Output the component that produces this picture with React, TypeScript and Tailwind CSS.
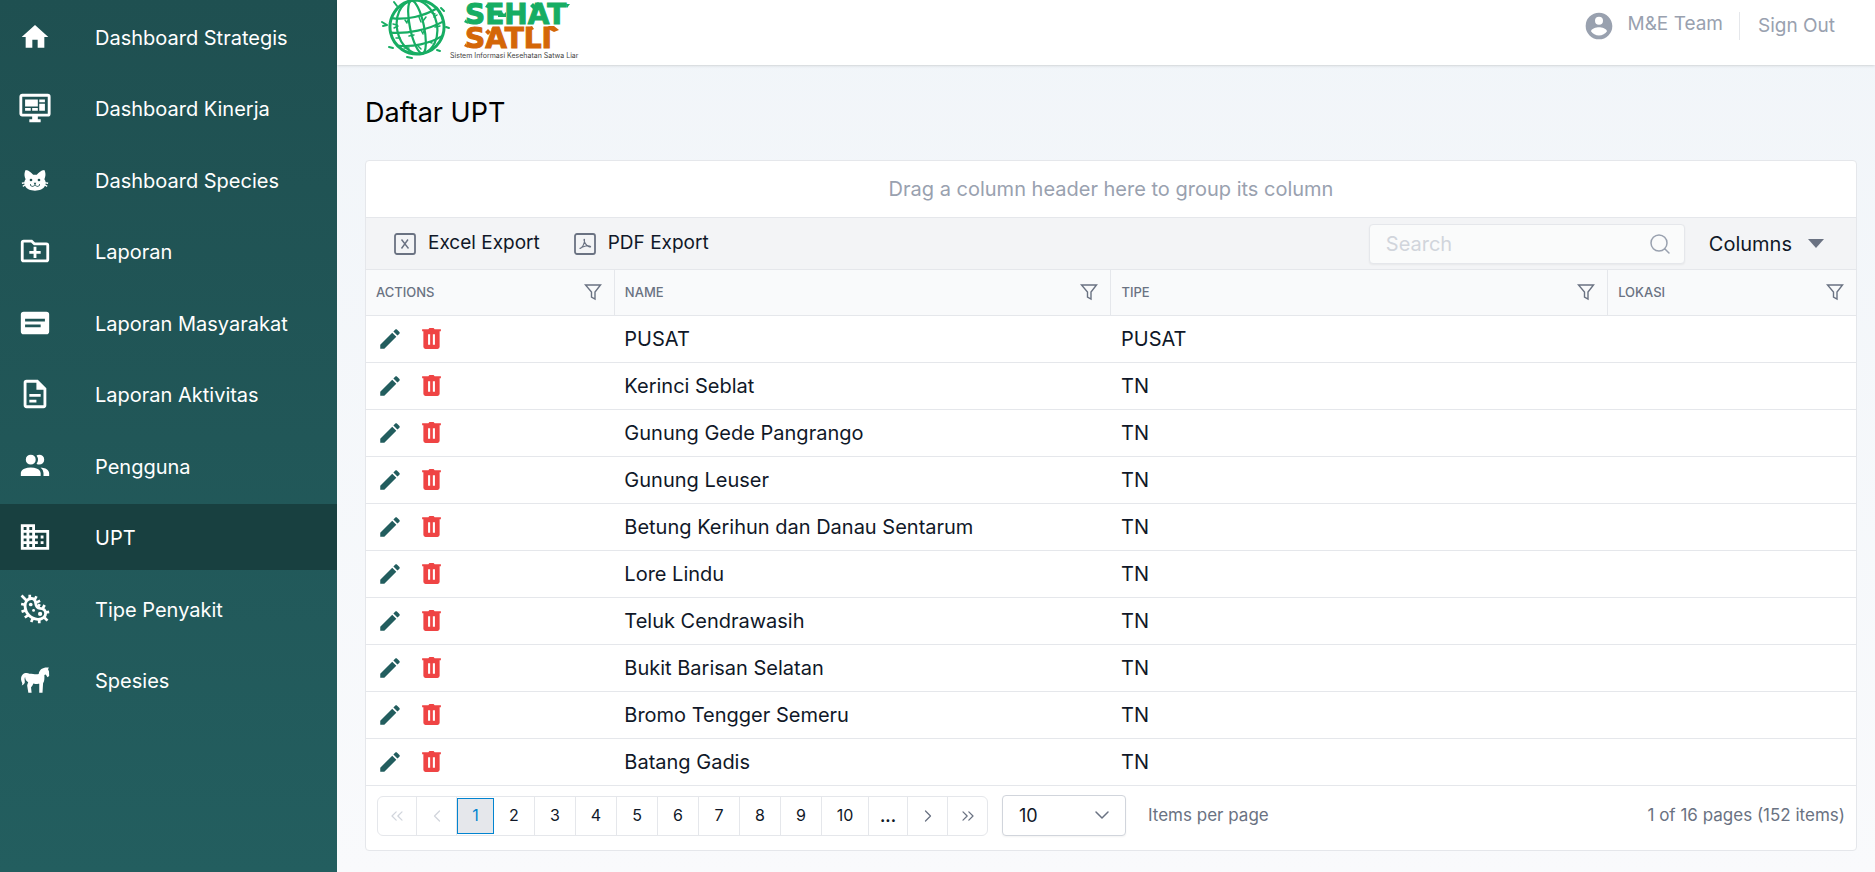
import { useState, type ReactNode } from "react";
import { Search, ChevronLeft, ChevronRight, ChevronsLeft, ChevronsRight, ChevronDown } from "lucide-react";

type Upt = { id: number; name: string; tipe: string; lokasi: string };

const rows: Upt[] = [
  { id: 1, name: "PUSAT", tipe: "PUSAT", lokasi: "" },
  { id: 2, name: "Kerinci Seblat", tipe: "TN", lokasi: "" },
  { id: 3, name: "Gunung Gede Pangrango", tipe: "TN", lokasi: "" },
  { id: 4, name: "Gunung Leuser", tipe: "TN", lokasi: "" },
  { id: 5, name: "Betung Kerihun dan Danau Sentarum", tipe: "TN", lokasi: "" },
  { id: 6, name: "Lore Lindu", tipe: "TN", lokasi: "" },
  { id: 7, name: "Teluk Cendrawasih", tipe: "TN", lokasi: "" },
  { id: 8, name: "Bukit Barisan Selatan", tipe: "TN", lokasi: "" },
  { id: 9, name: "Bromo Tengger Semeru", tipe: "TN", lokasi: "" },
  { id: 10, name: "Batang Gadis", tipe: "TN", lokasi: "" },
];

const icons = {
  home: "M10,20V14H14V20H19V12H22L12,3L2,12H5V20H10Z",
  monitor: "M21,16V4H3V16H21M21,2A2,2 0 0,1 23,4V16A2,2 0 0,1 21,18H14V20H16V22H8V20H10V18H3C1.89,18 1,17.1 1,16V4C1,2.89 1.89,2 3,2H21M5,6H14V11H5V6M15,6H19V8H15V6M19,9V14H15V9H19M5,12H9V14H5V12M10,12H14V14H10V12Z",
  cat: "M12,8L10.67,8.09C9.81,7.07 7.4,4.5 5,4.5C5,4.5 3.03,7.46 4.96,11.41C4.41,12.24 4.07,12.67 4,13.66L2.07,13.95L2.28,14.93L4.04,14.67L4.18,15.38L2.61,16.32L3.08,17.21L4.53,16.32C5.68,18.76 8.59,20 12,20C15.41,20 18.32,18.76 19.47,16.32L20.92,17.21L21.39,16.32L19.82,15.38L19.96,14.67L21.72,14.93L21.93,13.95L20,13.66C19.93,12.67 19.59,12.24 19.04,11.41C20.97,7.46 19,4.5 19,4.5C16.6,4.5 14.19,7.07 13.33,8.09L12,8M9,11A1,1 0 0,1 10,12A1,1 0 0,1 9,13A1,1 0 0,1 8,12A1,1 0 0,1 9,11M15,11A1,1 0 0,1 16,12A1,1 0 0,1 15,13A1,1 0 0,1 14,12A1,1 0 0,1 15,11M11,14H13L12.3,15.39C12.5,16.03 13.06,16.5 13.75,16.5A1.5,1.5 0 0,0 15.25,15H15.75A2,2 0 0,1 13.75,17C13,17 12.35,16.59 12,16V16H12C11.65,16.59 11,17 10.25,17A2,2 0 0,1 8.25,15H8.75A1.5,1.5 0 0,0 10.25,16.5C10.94,16.5 11.5,16.03 11.7,15.39L11,14Z",
  folder: "M4,4H10L12,6H20A2,2 0 0,1 22,8V18A2,2 0 0,1 20,20H4A2,2 0 0,1 2,18V6A2,2 0 0,1 4,4M4,6V18H20V8H11.2L9.2,6H4M11,9H13V12H16V14H13V17H11V14H8V12H11V9Z",
  card: "M20,4H4A2,2 0 0,0 2,6V18A2,2 0 0,0 4,20H20A2,2 0 0,0 22,18V6A2,2 0 0,0 20,4M5,13V15H16V13H5M5,9V11H19V9H5Z",
  doc: "M6,2A2,2 0 0,0 4,4V20A2,2 0 0,0 6,22H18A2,2 0 0,0 20,20V8L14,2H6M6,4H13V9H18V20H6V4M8,12V14H16V12H8M8,16V18H13V16H8Z",
  people: "M16 17V19H2V17S2 13 9 13 16 17 16 17M12.5 7.5A3.5 3.5 0 1 0 9 11A3.5 3.5 0 0 0 12.5 7.5M15.94 13A5.32 5.32 0 0 1 18 17V19H22V17S22 13.37 15.94 13M15 4A3.39 3.39 0 0 0 13.07 4.59A5 5 0 0 1 13.07 10.41A3.39 3.39 0 0 0 15 11A3.5 3.5 0 0 0 15 4Z",
  building: "M18,15H16V17H18M18,11H16V13H18M20,19H12V17H14V15H12V13H14V11H12V9H20M10,7H8V5H10M10,11H8V9H10M10,15H8V13H10M10,19H8V17H10M6,7H4V5H6M6,11H4V9H6M6,15H4V13H6M6,19H4V17H6M12,7V3H2V21H22V7H12Z",
  horse: "M21.8 3.1L20.6 3.2C17.6 3.1 15 4.6 14.6 7.8C12.6 8.3 10.6 7.6 8 7.6C6.8 6.9 4.6 6.9 3.3 8.1C2 9.4 1.9 11.4 2.5 13C3.1 14.4 3.3 14.9 2.6 15.8C4.1 15.6 5.1 14.3 4.8 12.6C4.6 11.6 4.5 10.6 5 9.8C5.1 11.6 5.9 12.7 7.2 13.5C6.6 15 6.3 15.7 6.6 16.7L7.3 21H9.6L9.2 17.1C10.2 15.9 10.6 15.2 10.8 14.4C12.3 14.8 13.6 14.9 15 14.7V21H17.3L17.7 14.3C18.8 12.7 18.7 10.4 18.6 8.4L19.6 8.2L20.8 10.1L22 9.2L21.9 6L21.2 4.4Z",
  user: "M12,19.2C9.5,19.2 7.29,17.92 6,16C6.03,14 10,12.9 12,12.9C14,12.9 17.97,14 18,16C16.71,17.92 14.5,19.2 12,19.2M12,5A3,3 0 0,1 15,8A3,3 0 0,1 12,11A3,3 0 0,1 9,8A3,3 0 0,1 12,5M12,2A10,10 0 0,0 2,12A10,10 0 0,0 12,22A10,10 0 0,0 22,12C22,6.47 17.5,2 12,2Z",
  pencil: "M20.71,7.04C21.1,6.65 21.1,6 20.71,5.63L18.37,3.29C18,2.9 17.35,2.9 16.96,3.29L15.12,5.12L18.87,8.87M3,17.25V21H6.75L17.81,9.93L14.06,6.18L3,17.25Z",
  trash: "M3 3H9L10 2H14L15 3H21V5H19.8V20A2 2 0 0 1 17.8 22H6.200A2 2 0 0 1 4.200 20V5H3V3M8.700 8V18H10.700V8H8.700M13.300 8V18H15.300V8H13.300Z",
};

function Icon({ d, className }: { d: string; className: string }) {
  return (
    <svg viewBox="0 0 24 24" className={className} fill="currentColor" aria-hidden="true">
      <path fillRule="evenodd" d={d} />
    </svg>
  );
}

function BacteriaIcon() {
  return (
    <svg viewBox="0 0 24 24" className="size-[34px]" fill="none" stroke="currentColor" aria-hidden="true">
      <path strokeWidth="2" d="M9.500 4.600C6.600 4.800 4.900 7 5 10C5.200 15.200 9 19 14 19.300C17.300 19.400 19.600 17.500 19.500 15C19.400 12.800 17.600 11.800 15.600 11.600C13.800 11.400 12.800 10.400 12.600 8.600C12.400 6.300 11.700 4.500 9.500 4.600Z" />
      <path strokeWidth="1.900" d="M2.500 2.500L6 6M8.300 2V4.600M13 3L11.800 5.300M15.600 6.200L12.800 7.500M2.200 8.500L5 9M2.500 14L5.700 12.800M4.800 18L7.800 16M9.300 21.200L10.600 18.400M15 22V19.300M20.800 20.200L18.600 18M22 14L19.400 14.500M18.800 9.200L17.200 12M15.300 8.600L14 11" />
      <g fill="currentColor" stroke="none">
        <circle cx="9" cy="8.800" r="1.300" />
        <circle cx="11" cy="13" r="1" />
        <circle cx="15.600" cy="15.500" r="1.500" />
      </g>
    </svg>
  );
}

const menu: { label: string; icon: ReactNode }[] = [
  { label: "Dashboard Strategis", icon: <Icon d={icons.home} className="size-8" /> },
  { label: "Dashboard Kinerja", icon: <Icon d={icons.monitor} className="size-[34px]" /> },
  { label: "Dashboard Species", icon: <Icon d={icons.cat} className="size-8" /> },
  { label: "Laporan", icon: <Icon d={icons.folder} className="size-[34px]" /> },
  { label: "Laporan Masyarakat", icon: <Icon d={icons.card} className="size-[34px]" /> },
  { label: "Laporan Aktivitas", icon: <Icon d={icons.doc} className="size-[34px]" /> },
  { label: "Pengguna", icon: <Icon d={icons.people} className="size-[34px]" /> },
  { label: "UPT", icon: <Icon d={icons.building} className="size-[34px]" /> },
  { label: "Tipe Penyakit", icon: <BacteriaIcon /> },
  { label: "Spesies", icon: <Icon d={icons.horse} className="size-[34px]" /> },
];

function Logo() {
  return (
    <svg width="210" height="64" viewBox="380 0 210 64" role="img" aria-label="Sehat Satli">
      <g fill="none" stroke="#17ad63" strokeWidth="2.200" transform="rotate(-12 417 27)">
        <circle cx="417" cy="27" r="27" strokeWidth="3" />
        <ellipse cx="417" cy="27" rx="20" ry="27" />
        <ellipse cx="417" cy="27" rx="7" ry="27" />
        <path d="M394 13C408 18 426 18 440 13M390 27C406 32 428 32 444 27M394 41C408 46 426 46 440 41" />
      </g>
      <g fill="none" stroke="#17ad63" strokeWidth="1.500" strokeLinecap="round">
        <path d="M393 24l4 1M394 28l4-2M405 20l2 3M407 22l2-3M419 17l2 5M423 21l3-4M432 13l3 1M434 17l3-2M396 38l4 0M409 36l5-1M421 30l2 4M425 29l-2 4M435 27l5-1M404 48l5 0M418 46l3 3M429 42l3 1" />
        <path strokeWidth="2" d="M382 22l5 3M383 26l4-1M394 2l3 4M389 47l4 1M407 57l5 1M437 50l3 1M446 27l3 1M441 8l3 3" />
      </g>
      <g fontSize="28" fontWeight="700" fontFamily="DejaVu Sans">
        <text x="465" y="24" fill="#17ad63" stroke="#17ad63">SEHAT</text>
        <text x="465" y="48" fill="#d46608" stroke="#d46608">SATLI</text>
      </g>
      <g fill="#17ad63">
        <path d="M485 7l2-3 4 1-1 4zM530 6l3-3 3 3-2 4zM536 4l2-2 3 3-3 3zM566 4l4 0-3 4zM466 19l-2 3 4 2z" />
        <path d="M498 12l2 2 2-2 2 2 2-2v5h-8z" />
      </g>
      <g fill="#d46608">
        <path d="M485 32l3-3 3 3-3 3zM491 29l3-2 1 4zM528 28l4-2 2 3-4 2zM546 28l3-2 5 0 5 4-5 2zM466 43l-2 3 4 2z" />
      </g>
      <text x="450" y="58" fontSize="7" fill="#3f3f3f" fontFamily="Inter">Sistem Informasi Kesehatan Satwa Liar</text>
    </svg>
  );
}

function FilterIcon() {
  return (
    <svg viewBox="0 0 18 18" className="size-[18px]" fill="none" stroke="currentColor" strokeWidth="1.400" aria-hidden="true">
      <path d="M1.500 2H16.500L11 9V16L7.500 14V9Z" />
    </svg>
  );
}

const fileIcon = "size-[22px] text-gray-500";

export default function App() {
  const [active, setActive] = useState("UPT");
  const [page, setPage] = useState(1);
  const [search, setSearch] = useState("");
  const [pageSize, setPageSize] = useState("10");

  const shown = rows.filter((r) => r.name.toLowerCase().includes(search.toLowerCase()));

  return (
    <div className="flex min-h-screen bg-linear-to-b from-[#f1f5f9] to-[#f9fafc] font-[Inter,sans-serif] text-gray-900">
      <aside className="w-[337px] shrink-0 bg-linear-to-b from-[#1f5051] to-[#235e5f] pt-1">
        <nav className="flex h-[709px] flex-col justify-between">
          {menu.map((m) => (
            <a
              key={m.label}
              href="#"
              onClick={() => setActive(m.label)}
              className={`flex h-[66px] items-center gap-[26px] text-xl text-white ${active === m.label ? "bg-[#184040]" : ""}`}
            >
              <span className="flex w-[69px] justify-center">{m.icon}</span>
              <span className="pt-0.5">{m.label}</span>
            </a>
          ))}
        </nav>
      </aside>

      <div className="flex min-w-0 flex-1 flex-col">
        <header className="flex h-[65px] items-start justify-between bg-white pr-10 pl-[43px] shadow-sm">
          <Logo />
          <div className="flex items-center pt-[10px] text-[19px] text-gray-400">
            <Icon d={icons.user} className="size-8" />
            <span className="-mt-1 ml-3">M&amp;E Team</span>
            <span className="ml-4 h-7 w-px bg-gray-200" />
            <button className="ml-[18px]">Sign Out</button>
          </div>
        </header>

        <main className="pt-7 pr-[18px] pl-7">
          <h1 className="text-[27px] leading-10 text-black">Daftar UPT</h1>

          <div className="mt-[27px] rounded border border-gray-200 bg-white">
            <div className="flex h-14 items-center justify-center text-xl text-gray-400">
              Drag a column header here to group its column
            </div>

            <div className="flex h-[53px] items-center border-y border-gray-200 bg-gray-100 pr-8 pl-7 text-xl">
              <button className="flex items-center gap-3 text-[19px]">
                <svg viewBox="0 0 22 22" className={fileIcon} fill="none" stroke="currentColor" aria-hidden="true">
                  <rect x="1" y="1" width="20" height="20" rx="2" strokeWidth="1.800" />
                  <path d="M7.500 6.500L14.500 15.500M14 6.500L7.500 15.500" strokeWidth="1.400" />
                </svg>
                Excel Export
              </button>
              <button className="ml-[34px] flex items-center gap-3 text-[19px]">
                <svg viewBox="0 0 22 22" className={fileIcon} fill="none" stroke="currentColor" aria-hidden="true">
                  <rect x="1" y="1" width="20" height="20" rx="2" strokeWidth="1.800" />
                  <path d="M5.500 15.500C8 15 11 11 10.500 6.500C9.500 5.500 10 10 13 12.500C15 14 17 14.500 16.500 13.500C15 12 9 13 6 15.500" strokeWidth="1.100" />
                </svg>
                PDF Export
              </button>
              <label className="ml-auto flex h-10 w-[316px] items-center rounded border border-gray-200 bg-[#fafbfb] pr-3 pl-4 shadow-xs">
                <input
                  aria-label="Search"
                  placeholder="Search"
                  value={search}
                  onChange={(e) => setSearch(e.target.value)}
                  className="min-w-0 flex-1 bg-transparent outline-none placeholder:text-gray-300"
                />
                <Search className="size-6 text-gray-400" strokeWidth={1.5} />
              </label>
              <button className="ml-6 flex items-center gap-4">
                Columns
                <svg viewBox="0 0 16 9" className="h-[9px] w-4 text-gray-500" fill="currentColor" aria-hidden="true">
                  <path d="M0 0H16L8 9Z" />
                </svg>
              </button>
            </div>

            <table className="w-full table-fixed border-collapse text-left">
              <colgroup>
                <col className="w-1/6" />
                <col className="w-1/3" />
                <col className="w-1/3" />
                <col className="w-1/6" />
              </colgroup>
              <thead>
                <tr className="h-[45px] border-b border-gray-200 bg-gray-50 text-gray-500">
                  {["ACTIONS", "NAME", "TIPE", "LOKASI"].map((h) => (
                    <th key={h} className="border-r border-gray-200 pr-3 pl-[10px] text-[13px] font-medium last:border-r-0">
                      <div className="flex items-center justify-between">
                        {h}
                        <button aria-label={`Filter ${h}`}><FilterIcon /></button>
                      </div>
                    </th>
                  ))}
                </tr>
              </thead>
              <tbody>
                {shown.map((r) => (
                  <tr key={r.id} className="h-[47px] border-b border-gray-200">
                    <td className="px-[11px]">
                      <div className="flex items-center gap-4">
                        <button aria-label="Edit"><Icon d={icons.pencil} className="size-[26px] text-[#225d5e]" /></button>
                        <button aria-label="Hapus"><Icon d={icons.trash} className="size-[25px] text-[#ef4444]" /></button>
                      </div>
                    </td>
                    <td className="px-[10px] text-xl">{r.name}</td>
                    <td className="px-[10px] text-xl">{r.tipe}</td>
                    <td className="px-[10px] text-xl">{r.lokasi}</td>
                  </tr>
                ))}
              </tbody>
            </table>

            <div className="flex h-16 items-center px-[11px] pb-1 text-[17px] text-gray-500">
              <div className="flex h-10 divide-x divide-gray-200 rounded-md border border-gray-200 text-base">
                <button aria-label="First page" disabled className="flex w-[39px] items-center justify-center text-gray-300"><ChevronsLeft className="size-5" strokeWidth={1.5} /></button>
                <button aria-label="Previous page" disabled className="flex w-10 items-center justify-center text-gray-300"><ChevronLeft className="size-5" strokeWidth={1.5} /></button>
                {[1, 2, 3, 4, 5, 6, 7, 8, 9, 10].map((n) => (
                  <button
                    key={n}
                    onClick={() => setPage(n)}
                    className={
                      n === page
                        ? "my-px w-[37px] border border-[#0284d0] bg-gray-200 pb-0.5 text-[#0284d0]"
                        : n === 10
                          ? "w-[47px] pb-0.5 text-gray-900"
                          : "w-[41px] pb-0.5 text-gray-900"
                    }
                  >
                    {n}
                  </button>
                ))}
                <button className="w-[39px] font-bold text-gray-900">...</button>
                <button aria-label="Next page" className="flex w-10 items-center justify-center"><ChevronRight className="size-5" strokeWidth={1.5} /></button>
                <button aria-label="Last page" className="flex w-[39px] items-center justify-center"><ChevronsRight className="size-5" strokeWidth={1.5} /></button>
              </div>
              <div className="relative ml-[14px]">
                <select
                  aria-label="Items per page"
                  value={pageSize}
                  onChange={(e) => setPageSize(e.target.value)}
                  className="h-[41px] w-[124px] appearance-none rounded border border-gray-300 bg-white pl-4 text-lg text-gray-900 shadow-xs"
                >
                  <option>10</option>
                  <option>20</option>
                  <option>50</option>
                </select>
                <ChevronDown className="pointer-events-none absolute top-2 right-3 size-6" strokeWidth={1.5} />
              </div>
              <span className="ml-[22px]">Items per page</span>
              <span className="ml-auto">1 of 16 pages (152 items)</span>
            </div>
          </div>
        </main>
      </div>
    </div>
  );
}
